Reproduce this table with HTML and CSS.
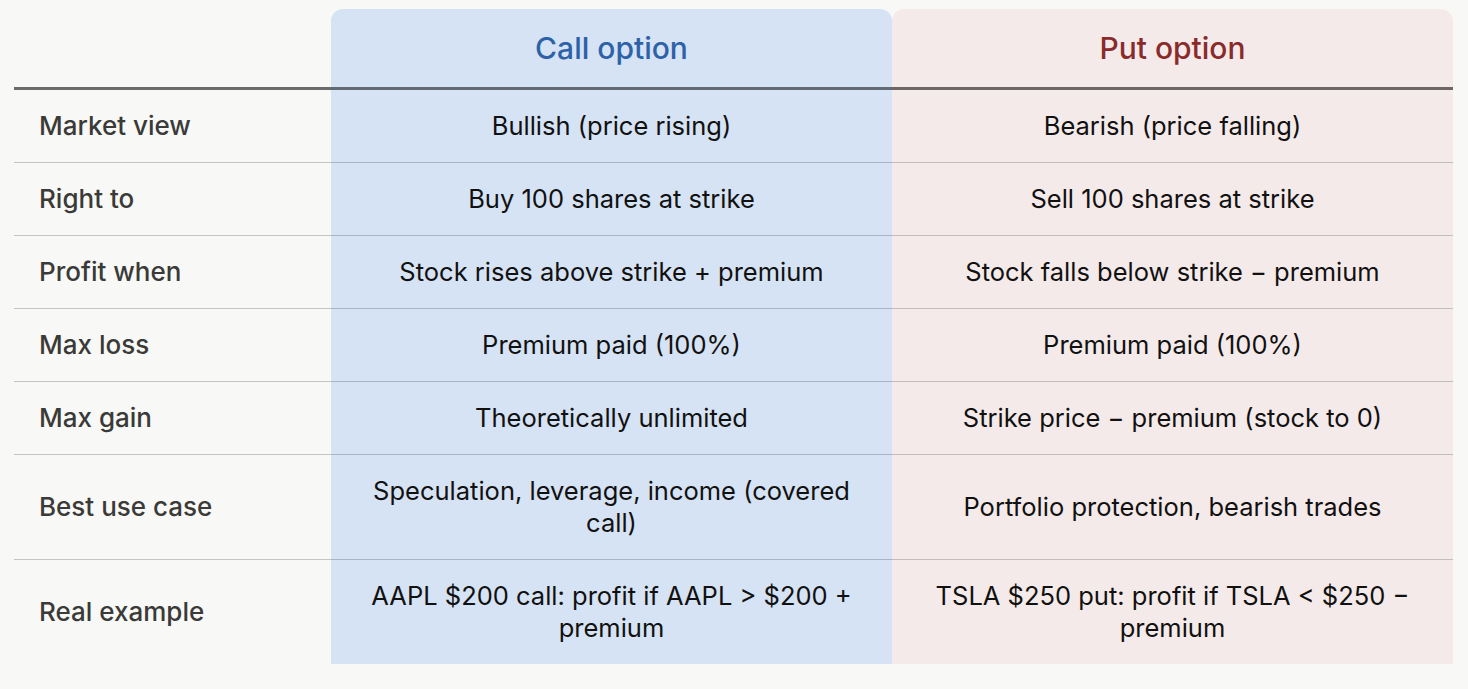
FILE: index.html
```html
<!DOCTYPE html>
<html lang="en">
<head>
<meta charset="utf-8">
<title>Call vs Put option</title>
<link rel="stylesheet" href="styles.css">
</head>
<body>
<div class="wrap">
  <div class="grid">
    <div class="cell head label"></div>
    <div class="cell head call">Call option</div>
    <div class="cell head put">Put option</div>

    <div class="cell label">Market view</div>
    <div class="cell call">Bullish (price rising)</div>
    <div class="cell put">Bearish (price falling)</div>

    <div class="cell label">Right to</div>
    <div class="cell call">Buy 100 shares at strike</div>
    <div class="cell put">Sell 100 shares at strike</div>

    <div class="cell label">Profit when</div>
    <div class="cell call">Stock rises above strike + premium</div>
    <div class="cell put">Stock falls below strike − premium</div>

    <div class="cell label">Max loss</div>
    <div class="cell call">Premium paid (100%)</div>
    <div class="cell put">Premium paid (100%)</div>

    <div class="cell label">Max gain</div>
    <div class="cell call">Theoretically unlimited</div>
    <div class="cell put">Strike price − premium (stock to 0)</div>

    <div class="cell label">Best use case</div>
    <div class="cell call">Speculation, leverage, income (covered call)</div>
    <div class="cell put">Portfolio protection, bearish trades</div>

    <div class="cell label last">Real example</div>
    <div class="cell call last">AAPL $200 call: profit if AAPL &gt; $200 + premium</div>
    <div class="cell put last">TSLA $250 put: profit if TSLA &lt; $250 − premium</div>
  </div>
</div>
</body>
</html>
```
FILE: styles.css
```css
html, body {
  margin: 0;
  padding: 0;
  background: #f8f8f6;
}
body {
  font-family: Inter, "Noto Sans", sans-serif;
  color: #111111;
}
.wrap {
  padding: 9px 15px 0 14px;
}
.grid {
  display: grid;
  grid-template-columns: 317px 561px 561px;
}
.cell {
  display: flex;
  align-items: center;
  justify-content: center;
  text-align: center;
  padding: 20px 30px;
  font-size: 25.5px;
  line-height: 32px;
  border-bottom: 1px solid #c4c4c2;
}
.cell.label {
  justify-content: flex-start;
  text-align: left;
  padding-left: 25px;
  padding-right: 10px;
  color: #3a3a38;
  font-weight: 500;
  font-size: 26px;
}
.cell.call {
  background: #d6e3f4;
  border-bottom-color: #aab4c2;
}
.cell.put {
  background: #f5eaea;
  border-bottom-color: #c4bcbc;
}
.cell.head {
  font-size: 30px;
  line-height: 39px;
  font-weight: 500;
  padding-top: 20px;
  padding-bottom: 19px;
  border-bottom: 3px solid #6b6b6b;
}
.cell.head.label {
  background: transparent;
}
.cell.head.call {
  color: #2d62a8;
  border-radius: 12px 12px 0 0;
  border-bottom-color: #636a74;
}
.cell.head.put {
  color: #8a2b2b;
  border-radius: 12px 12px 0 0;
  border-bottom-color: #6e6666;
}
.cell.last {
  border-bottom: none;
}
```
